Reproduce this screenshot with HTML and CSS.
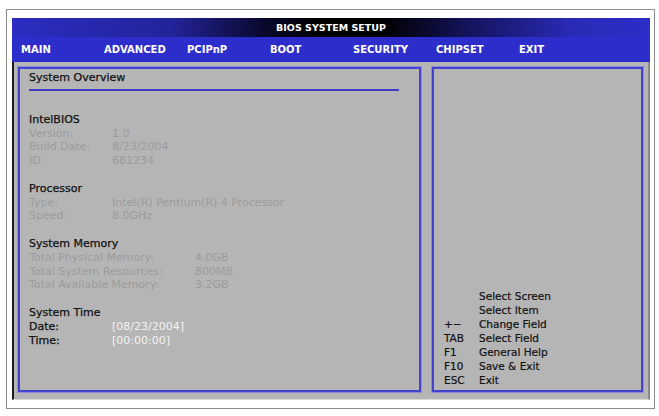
FILE: index.html
```html
<!DOCTYPE html>
<html>
<head>
<title>BIOS System Setup</title>
<link rel="stylesheet" href="styles.css">
</head>
<body>

<div class="frame">
  <div class="screen">
    <div class="title-bar">BIOS SYSTEM SETUP</div>
    <div class="menu-bar">
      <span>MAIN</span>
      <span>ADVANCED</span>
      <span>PCIPnP</span>
      <span>BOOT</span>
      <span>SECURITY</span>
      <span>CHIPSET</span>
      <span>EXIT</span>
    </div>
    <div class="content">
      <div class="panel main-panel">
        <div class="panel-title">System Overview</div>

        <div class="section">
          <div class="section-head">IntelBIOS</div>
          <div class="rows">
            <span>Version:</span><span>1.0</span>
            <span>Build Date:</span><span>8/23/2004</span>
            <span>ID:</span><span>681234</span>
          </div>
        </div>

        <div class="section">
          <div class="section-head">Processor</div>
          <div class="rows">
            <span>Type:</span><span>Intel(R) Pentium(R) 4 Processor</span>
            <span>Speed:</span><span>8.0GHz</span>
          </div>
        </div>

        <div class="section">
          <div class="section-head">System Memory</div>
          <div class="rows wide">
            <span>Total Physical Memory:</span><span>4.0GB</span>
            <span>Total System Resources:</span><span>800MB</span>
            <span>Total Available Memory:</span><span>3.2GB</span>
          </div>
        </div>

        <div class="section">
          <div class="section-head">System Time</div>
          <div class="rows editable">
            <span>Date:</span><span>[08/23/2004]</span>
            <span>Time:</span><span>[00:00:00]</span>
          </div>
        </div>
      </div>

      <div class="panel help-panel">
        <div class="help">
          <span></span><span>Select Screen</span>
          <span></span><span>Select Item</span>
          <span>+&minus;</span><span>Change Field</span>
          <span>TAB</span><span>Select Field</span>
          <span>F1</span><span>General Help</span>
          <span>F10</span><span>Save &amp; Exit</span>
          <span>ESC</span><span>Exit</span>
        </div>
      </div>
    </div>
  </div>
</div>

</body>
</html>
```

FILE: styles.css
```css
body {
  margin: 0;
  background: #fff;
  font-family: 'DejaVu Sans', Verdana, sans-serif;
}

.frame {
  margin: 9px 0 0 6px;
  width: 638px;
  height: 382px;
  padding: 8px 4px 8px 5px;
  border: 1px solid #8c8c8c;
}

.screen {
  height: 382px;
  display: flex;
  flex-direction: column;
  background: #b5b5b5;
}

.title-bar {
  height: 19px;
  line-height: 19px;
  text-align: center;
  color: #fff;
  font-size: 9.5px;
  font-weight: bold;
  background: linear-gradient(to right, #2c2cc2 0%, #23239a 25%, #08082a 40%, #000 48%, #000 58%, #141460 72%, #2a2ab8 88%, #2d2dc8 100%);
}

.menu-bar {
  height: 25px;
  display: grid;
  grid-template-columns: repeat(7, 83px);
  align-items: center;
  padding-left: 9px;
  color: #fff;
  font-size: 10px;
  font-weight: bold;
  background: #2d2dcc;
}

.content {
  flex: 1;
  display: flex;
  gap: 11px;
  padding: 5px 5px 7px 4px;
  border-left: 2px solid #1a1a1a;
  border-right: 2px solid #8a8a8a;
  border-bottom: 1px solid #d8d8d8;
}

.panel {
  border: 2px solid #4343d0;
  box-shadow: 0 0 0 1px #8c8cd8;
}

.main-panel {
  width: 390px;
  padding: 2px 0 0 9px;
  color: #9c9c9c;
  font-size: 11px;
  line-height: 13.8px;
}

.panel-title {
  width: 370px;
  color: #111;
  -webkit-text-stroke: 0.25px #111;
  padding-bottom: 4px;
  border-bottom: 2px solid #3c3cc6;
  margin-bottom: 22px;
}

.section {
  margin-bottom: 13.8px;
}

.section-head {
  color: #111;
  -webkit-text-stroke: 0.25px #111;
}

.rows {
  display: grid;
  grid-template-columns: 83px auto;
}

.rows.wide {
  grid-template-columns: 166px auto;
}

.rows.editable span:nth-child(odd) {
  color: #111;
  -webkit-text-stroke: 0.25px #111;
}

.rows.editable span:nth-child(even) {
  color: #f4f4f4;
}

.help-panel {
  flex: 1;
  display: flex;
  flex-direction: column;
  justify-content: flex-end;
  padding: 0 0 3px 10px;
}

.help {
  display: grid;
  grid-template-columns: 35px auto;
  color: #111;
  -webkit-text-stroke: 0.2px #111;
  font-size: 10.5px;
  line-height: 14px;
}
```
